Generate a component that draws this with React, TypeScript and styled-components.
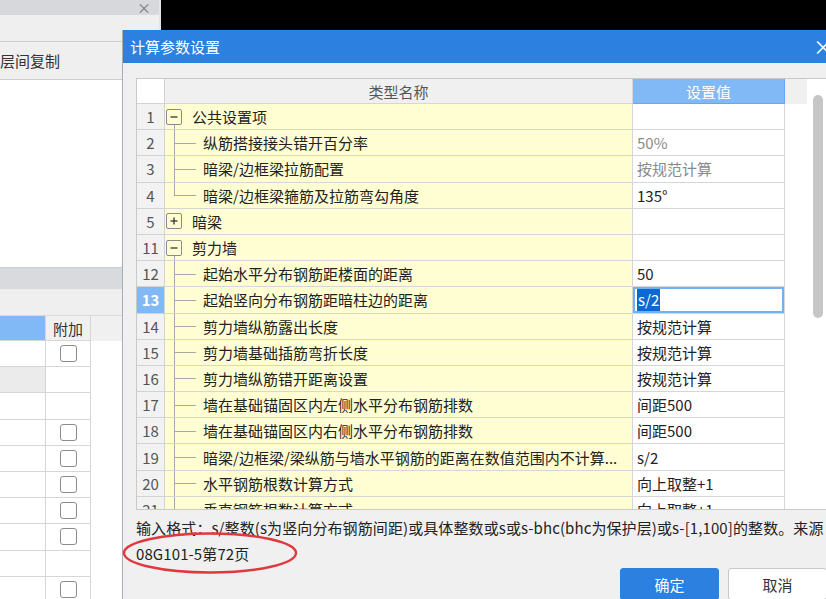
import React from 'react';
import styled, { createGlobalStyle } from 'styled-components';

const GlobalStyle = createGlobalStyle`
  html, body { margin: 0; padding: 0; background: #000; overflow: hidden; }
  body { font-family: "Microsoft YaHei", "Noto Sans CJK SC", sans-serif; color: #222; }
  #root { width: 826px; height: 599px; position: relative; overflow: hidden; }
`;

type Row = {
  no: string;
  kind: 'group' | 'child';
  name: string;
  open?: boolean;
  last?: boolean;
  value?: string;
  muted?: boolean;
  selected?: boolean;
};

const rows: Row[] = [
  { no: '1', kind: 'group', open: true, name: '公共设置项' },
  { no: '2', kind: 'child', name: '纵筋搭接接头错开百分率', value: '50%', muted: true },
  { no: '3', kind: 'child', name: '暗梁/边框梁拉筋配置', value: '按规范计算', muted: true },
  { no: '4', kind: 'child', last: true, name: '暗梁/边框梁箍筋及拉筋弯勾角度', value: '135°' },
  { no: '5', kind: 'group', name: '暗梁' },
  { no: '11', kind: 'group', open: true, name: '剪力墙' },
  { no: '12', kind: 'child', name: '起始水平分布钢筋距楼面的距离', value: '50' },
  { no: '13', kind: 'child', name: '起始竖向分布钢筋距暗柱边的距离', value: 's/2', selected: true },
  { no: '14', kind: 'child', name: '剪力墙纵筋露出长度', value: '按规范计算' },
  { no: '15', kind: 'child', name: '剪力墙基础插筋弯折长度', value: '按规范计算' },
  { no: '16', kind: 'child', name: '剪力墙纵筋错开距离设置', value: '按规范计算' },
  { no: '17', kind: 'child', name: '墙在基础锚固区内左侧水平分布钢筋排数', value: '间距500' },
  { no: '18', kind: 'child', name: '墙在基础锚固区内右侧水平分布钢筋排数', value: '间距500' },
  { no: '19', kind: 'child', name: '暗梁/边框梁/梁纵筋与墙水平钢筋的距离在数值范围内不计算...', value: 's/2' },
  { no: '20', kind: 'child', name: '水平钢筋根数计算方式', value: '向上取整+1' },
  { no: '21', kind: 'child', name: '垂直钢筋根数计算方式', value: '向上取整+1' },
];

// which rows of the background grid carry a checkbox; 'gray' marks a shaded first cell
const leftRows: Array<{ check: boolean; gray?: boolean }> = [
  { check: true },
  { check: false, gray: true },
  { check: false },
  { check: true },
  { check: true },
  { check: true },
  { check: true },
  { check: true },
  { check: false },
  { check: true },
];

/* ---------- background window ---------- */

const Screen = styled.div`
  position: relative;
  width: 826px;
  height: 599px;
  display: flex;
`;

const LeftPanel = styled.div`
  width: 159px;
  height: 599px;
  background: #efefef;
  border-right: 2px solid #e4e4e4;
  display: flex;
  flex-direction: column;
  overflow: hidden;
  & > * { flex-shrink: 0; }
`;

const LeftTitleBar = styled.div`
  height: 15px;
  background: #d6d8db;
  display: flex;
  align-items: center;
  justify-content: flex-end;
  padding-right: 8px;
  color: #7a7a7a;
  font-size: 14px;
  line-height: 15px;
`;

const LeftToolbar = styled.div`
  height: 26px;
  border-bottom: 1px solid #cdcdcd;
`;

const LeftTabRow = styled.div`
  height: 37px;
  border-bottom: 1px solid #cdcdcd;
  display: flex;
  align-items: center;
  font-size: 15px;
  color: #333;
`;

const LeftWhite = styled.div`
  height: 187px;
  background: #fff;
  border-bottom: 1px solid #cdcdcd;
`;

const LeftBand = styled.div<{ $h: number; $bg: string }>`
  height: ${p => p.$h}px;
  background: ${p => p.$bg};
`;

const LeftGridRow = styled.div<{ $head?: boolean }>`
  display: grid;
  grid-template-columns: 46px 45px 1fr;
  height: ${p => (p.$head ? 25 : 26.2)}px;
  background: ${p => (p.$head ? '#f0f0f0' : '#fff')};
  border-top: ${p => (p.$head ? '1px solid #dadada' : 'none')};
`;

const LeftCell = styled.div<{ $bg?: string }>`
  background: ${p => p.$bg || '#fff'};
  border-right: 1px solid #d6d6d6;
  border-bottom: 1px solid #d6d6d6;
  display: flex;
  align-items: center;
  justify-content: center;
  font-size: 15px;
  color: #333;
`;

const CheckBox = styled.span`
  width: 15px;
  height: 15px;
  border: 1.5px solid #8c8c8c;
  border-radius: 3px;
  background: #fff;
`;

/* ---------- dialog ---------- */

const Dialog = styled.div`
  position: absolute;
  left: 122px;
  top: 30px;
  width: 720px;
  height: 590px;
  background: #f0f0f0;
  border-left: 1px solid #a8acb3;
  display: flex;
  flex-direction: column;
`;

const TitleBar = styled.div`
  height: 33px;
  flex: 0 0 auto;
  background: #2b80e0;
  color: #fff;
  display: flex;
  align-items: center;
  justify-content: space-between;
  padding: 0 8px 0 7px;
  font-size: 15px;
`;

const CloseGlyph = styled.span`
  font-size: 20px;
  line-height: 20px;
  color: #fff;
  margin-right: 2px;
`;

const DialogBody = styled.div`
  padding: 15px 16px 0 13px;
  display: flex;
  flex-direction: column;
`;

const TableWrap = styled.div`
  height: 432px;
  box-sizing: border-box;
  border: 1px solid #c9c9c9;
  background: #fff;
  display: flex;
  overflow: hidden;
`;

const GridArea = styled.div`
  flex: 1;
  overflow: hidden;
`;

const ScrollTrack = styled.div`
  width: 19px;
  flex: 0 0 19px;
  background: #fff;
  padding: 16px 3px 0 6px;
  box-sizing: border-box;
`;

const ScrollThumb = styled.div`
  width: 10px;
  height: 223px;
  border-radius: 5px;
  background: #c6c6c6;
`;

const GridRow = styled.div<{ $head?: boolean }>`
  display: grid;
  grid-template-columns: 28px 468px 152px 1fr;
  height: ${p => (p.$head ? '25px' : '26.2px')};
  font-size: 15px;
`;

const NumCell = styled.div<{ $active?: boolean; $head?: boolean }>`
  background: ${p => (p.$active ? '#80b9f6' : p.$head ? '#fff' : '#f2f2f2')};
  color: ${p => (p.$active ? '#fff' : '#555')};
  font-weight: ${p => (p.$active ? 700 : 400)};
  border-right: 1px solid #d2d2d2;
  border-bottom: 1px solid #d2d2d2;
  display: flex;
  align-items: center;
  justify-content: center;
`;

const HeadCell = styled.div<{ $accent?: boolean }>`
  background: ${p => (p.$accent ? '#80b9f6' : '#f0f0f0')};
  color: ${p => (p.$accent ? '#fff' : '#555')};
  border-right: 1px solid ${p => (p.$accent ? '#62a8f2' : '#d6d6d6')};
  border-bottom: 1px solid ${p => (p.$accent ? '#62a8f2' : '#d6d6d6')};
  display: flex;
  align-items: center;
  justify-content: center;
`;

const HeadFiller = styled.div`
  background: #f0f0f0;
`;

const NameCell = styled.div`
  background: #fffed2;
  border-right: 1px solid #d6d6d6;
  border-bottom: 1px solid #d6d6d6;
  display: flex;
  align-items: center;
  color: #222;
  min-width: 0;
`;

const NameText = styled.span`
  white-space: nowrap;
  overflow: hidden;
  padding-right: 8px;
`;

const Gutter = styled.span<{ $w: number }>`
  position: relative;
  align-self: stretch;
  flex: 0 0 ${p => p.$w}px;
  display: flex;
  align-items: center;
`;

const Branch = styled(Gutter)<{ $last?: boolean }>`
  &::before {
    content: '';
    position: absolute;
    left: 9px;
    top: 0;
    width: 1px;
    height: ${p => (p.$last ? '50%' : '100%')};
    background: #a8a8a8;
  }
  &::after {
    content: '';
    position: absolute;
    left: 9px;
    top: 50%;
    width: 22px;
    height: 1px;
    background: #a8a8a8;
  }
`;

const GroupGutter = styled(Gutter)<{ $open?: boolean }>`
  &::after {
    content: '';
    display: ${p => (p.$open ? 'block' : 'none')};
    position: absolute;
    left: 9px;
    top: calc(50% + 8px);
    bottom: 0;
    width: 1px;
    background: #a8a8a8;
  }
`;

const ToggleBox = styled.span`
  width: 14px;
  height: 14px;
  margin-left: 1px;
  border: 1px solid #8a8a8a;
  border-radius: 2px;
  display: flex;
  align-items: center;
  justify-content: center;
`;

const ValueCell = styled.div<{ $muted?: boolean; $selected?: boolean }>`
  background: #fff;
  border-right: 1px solid #d6d6d6;
  border-bottom: 1px solid #d6d6d6;
  display: flex;
  align-items: center;
  padding-left: 4px;
  color: ${p => (p.$muted ? '#8a8a8a' : '#222')};
  box-shadow: ${p => (p.$selected ? 'inset 0 0 0 2px #74b1f4' : 'none')};
  white-space: nowrap;
  overflow: hidden;
`;

const SelText = styled.span`
  background: #0b6ad2;
  color: #fff;
  line-height: 22px;
  padding: 0 1px;
`;

const BodyFiller = styled.div`
  background: #fff;
`;

const FooterNote = styled.div`
  margin-top: 5px;
  font-size: 15px;
  line-height: 26px;
  color: #222;
  white-space: nowrap;
  letter-spacing: 0.1px;
`;

const ButtonRow = styled.div`
  margin-top: 1px;
  display: flex;
  justify-content: flex-end;
  gap: 9px;
`;

const Button = styled.button<{ $primary?: boolean }>`
  width: 99px;
  height: 32px;
  border-radius: 3px;
  border: 1px solid ${p => (p.$primary ? '#2b80e0' : '#c8c8c8')};
  background: ${p => (p.$primary ? '#2b80e0' : '#fff')};
  color: ${p => (p.$primary ? '#fff' : '#333')};
  font-family: inherit;
  font-size: 15px;
  padding: 0;
`;

const Annotation = styled.svg`
  position: absolute;
  left: 121px;
  top: 531px;
  overflow: visible;
  pointer-events: none;
`;

function Toggle({ open }: { open?: boolean }) {
  return (
    <ToggleBox>
      <svg width="10" height="10" viewBox="0 0 10 10">
        <path d="M1.5 5h7" stroke="#333" strokeWidth="1.3" />
        {!open && <path d="M5 1.5v7" stroke="#333" strokeWidth="1.3" />}
      </svg>
    </ToggleBox>
  );
}

function TableRow({ row }: { row: Row }) {
  return (
    <GridRow>
      <NumCell $active={row.selected}>{row.no}</NumCell>
      <NameCell>
        {row.kind === 'group' ? (
          <GroupGutter $w={27} $open={row.open}>
            <Toggle open={row.open} />
          </GroupGutter>
        ) : (
          <Branch $w={38} $last={row.last} />
        )}
        <NameText>{row.name}</NameText>
      </NameCell>
      <ValueCell $muted={row.muted} $selected={row.selected}>
        {row.selected ? <SelText>{row.value}</SelText> : row.value}
      </ValueCell>
      <BodyFiller />
    </GridRow>
  );
}

export default function App() {
  return (
    <>
      <GlobalStyle />
      <Screen>
        <LeftPanel>
          <LeftTitleBar>×</LeftTitleBar>
          <LeftToolbar />
          <LeftTabRow>层间复制</LeftTabRow>
          <LeftWhite />
          <LeftBand $h={21} $bg="#d8dadd" />
          <LeftBand $h={26} $bg="#efefef" />
          <LeftGridRow $head>
            <LeftCell $bg="#80b9f6" />
            <LeftCell $bg="#f0f0f0">附加</LeftCell>
            <div />
          </LeftGridRow>
          {leftRows.map((r, i) => (
            <LeftGridRow key={i}>
              <LeftCell $bg={r.gray ? '#ebebeb' : '#fff'} />
              <LeftCell>{r.check && <CheckBox />}</LeftCell>
              <div />
            </LeftGridRow>
          ))}
        </LeftPanel>

        <Dialog>
          <TitleBar>
            <span>计算参数设置</span>
            <CloseGlyph>×</CloseGlyph>
          </TitleBar>
          <DialogBody>
            <TableWrap>
              <GridArea>
                <GridRow $head>
                  <NumCell $head />
                  <HeadCell>类型名称</HeadCell>
                  <HeadCell $accent>设置值</HeadCell>
                  <HeadFiller />
                </GridRow>
                {rows.map(r => (
                  <TableRow key={r.no} row={r} />
                ))}
              </GridArea>
              <ScrollTrack>
                <ScrollThumb />
              </ScrollTrack>
            </TableWrap>
            <FooterNote>
              输入格式：s/整数(s为竖向分布钢筋间距)或具体整数或s或s-bhc(bhc为保护层)或s-[1,100]的整数。来源
              <br />
              08G101-5第72页
            </FooterNote>
            <ButtonRow>
              <Button $primary>确定</Button>
              <Button>取消</Button>
            </ButtonRow>
          </DialogBody>
        </Dialog>

        <Annotation width="180" height="44" viewBox="0 0 180 44">
          <ellipse cx="89" cy="22" rx="86" ry="19.5" fill="none" stroke="#e0383c" strokeWidth="2.4" />
        </Annotation>
      </Screen>
    </>
  );
}
